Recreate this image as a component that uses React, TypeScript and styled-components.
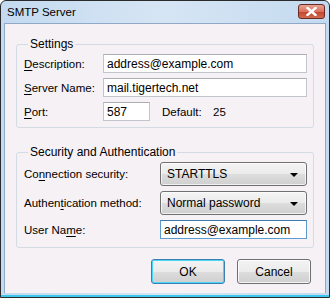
import React from 'react';
import styled, { createGlobalStyle } from 'styled-components';

const Global = createGlobalStyle`
  html, body {
    margin: 0;
    padding: 0;
    background: #fff;
  }
  * {
    box-sizing: border-box;
  }
`;

const Window = styled.div`
  width: 330px;
  height: 298px;
  display: flex;
  flex-direction: column;
  border: 1px solid #2b2b2b;
  border-radius: 6px 6px 0 0;
  background: linear-gradient(to right, #c4daf0, #d6e5f4 50%, #c4daf0);
  font-family: "Liberation Sans", Arial, sans-serif;
  font-size: 11.5px;
  color: #000;
  overflow: hidden;
`;

const TitleBar = styled.div`
  height: 22px;
  display: flex;
  align-items: center;
  justify-content: space-between;
  padding: 0 4px 0 6px;
`;

const Title = styled.div`
  font-size: 11.5px;
  color: #000;
`;

const CloseButton = styled.div`
  width: 27px;
  height: 15px;
  margin-top: -2px;
  border: 1px solid #6a2a24;
  border-radius: 3px;
  background: linear-gradient(#e8a493, #d8735e 50%, #c5412a 51%, #d16a52);
  display: flex;
  align-items: center;
  justify-content: center;
`;

const Panel = styled.div`
  flex: 1;
  margin: 0 3px 2px 3px;
  border: 1px solid #8fa9c6;
  border-bottom: none;
  background: #f5f1f5;
  padding: 13px 11px 0 11px;
  display: flex;
  flex-direction: column;
`;

const BottomEdge = styled.div`
  height: 2px;
  margin: 0 -4px;
  background: #3cc8ee;
`;

const Group = styled.fieldset<{ $gap?: number; $bottom?: number }>`
  margin: 0 0 ${(p) => p.$gap ?? 0}px 0;
  padding: 3px 6px ${(p) => p.$bottom ?? 6}px 7px;
  border: 1px solid #d3dbe3;
  border-radius: 3px;
  min-width: 0;
`;

const Legend = styled.legend`
  margin-left: 4px;
  padding: 0 2px;
  line-height: 14px;
  font-size: 12px;
`;

const Grid = styled.div<{ $label: number }>`
  display: grid;
  grid-template-columns: ${(p) => p.$label}px 1fr;
  row-gap: 5px;
  align-items: center;
`;

const Label = styled.label`
  white-space: nowrap;
  u {
    text-decoration: underline;
    text-underline-offset: 2px;
  }
`;

const TextBox = styled.div<{ $width?: number; $focused?: boolean }>`
  height: 19px;
  width: ${(p) => (p.$width ? `${p.$width}px` : '100%')};
  background: #fff;
  border: 1px solid ${(p) => (p.$focused ? '#5b9bd0' : '#c2c6cc')};
  border-top-color: ${(p) => (p.$focused ? '#3d7bad' : '#abadb3')};
  padding: 0 3px;
  display: flex;
  align-items: center;
  font-size: 12px;
`;

const PortRow = styled.div`
  display: flex;
  align-items: center;
`;

const DefaultText = styled.span`
  margin-left: 12px;
  width: 51px;
`;

const Select = styled.div`
  height: 24px;
  border: 1px solid #707070;
  border-radius: 3px;
  background: linear-gradient(#f4f4f4, #ebebeb 50%, #dddddd 51%, #cfcfcf);
  box-shadow: inset 0 0 0 1px rgba(255, 255, 255, 0.7);
  display: flex;
  align-items: center;
  justify-content: space-between;
  padding: 0 8px 0 6px;
  font-size: 12px;
`;

const Arrow = styled.span`
  width: 0;
  height: 0;
  border-left: 4px solid transparent;
  border-right: 4px solid transparent;
  border-top: 4px solid #000;
  margin-top: 2px;
`;

const ButtonRow = styled.div`
  display: flex;
  justify-content: flex-end;
  gap: 12px;
  margin-top: 11px;
  padding-right: 3px;
`;

const Button = styled.div<{ $default?: boolean }>`
  width: 74px;
  height: 25px;
  border: 1px solid ${(p) => (p.$default ? '#3c7fb1' : '#707070')};
  border-radius: 3px;
  background: linear-gradient(#f3f3f3, #ebebeb 50%, #dddddd 51%, #cfcfcf);
  box-shadow: inset 0 0 0 1px ${(p) => (p.$default ? '#48d7f9' : 'rgba(255,255,255,0.8)')};
  display: flex;
  align-items: center;
  justify-content: center;
  font-size: 12px;
`;

const App: React.FC = () => (
  <Window>
    <Global />
    <TitleBar>
      <Title>SMTP Server</Title>
      <CloseButton>
        <svg width="11" height="9" viewBox="0 0 11 9">
          <path d="M1.5 1 L9.5 8 M9.5 1 L1.5 8" stroke="#fff" strokeWidth="2.4" strokeLinecap="square" />
        </svg>
      </CloseButton>
    </TitleBar>
    <Panel>
      <Group $gap={17}>
        <Legend>Settings</Legend>
        <Grid $label={79}>
          <Label><u>D</u>escription:</Label>
          <TextBox>address@example.com</TextBox>
          <Label><u>S</u>erver Name:</Label>
          <TextBox>mail.tigertech.net</TextBox>
          <Label><u>P</u>ort:</Label>
          <PortRow>
            <TextBox $width={47}>587</TextBox>
            <DefaultText>Default:</DefaultText>
            <span>25</span>
          </PortRow>
        </Grid>
      </Group>
      <Group $bottom={8}>
        <Legend>Security and Authentication</Legend>
        <Grid $label={136}>
          <Label>Co<u>n</u>nection security:</Label>
          <Select>STARTTLS<Arrow /></Select>
          <Label>Authen<u>t</u>ication method:</Label>
          <Select>Normal password<Arrow /></Select>
          <Label>User Na<u>m</u>e:</Label>
          <TextBox $focused>address@example.com</TextBox>
        </Grid>
      </Group>
      <ButtonRow>
        <Button $default>OK</Button>
        <Button>Cancel</Button>
      </ButtonRow>
    </Panel>
    <BottomEdge />
  </Window>
);

export default App;
